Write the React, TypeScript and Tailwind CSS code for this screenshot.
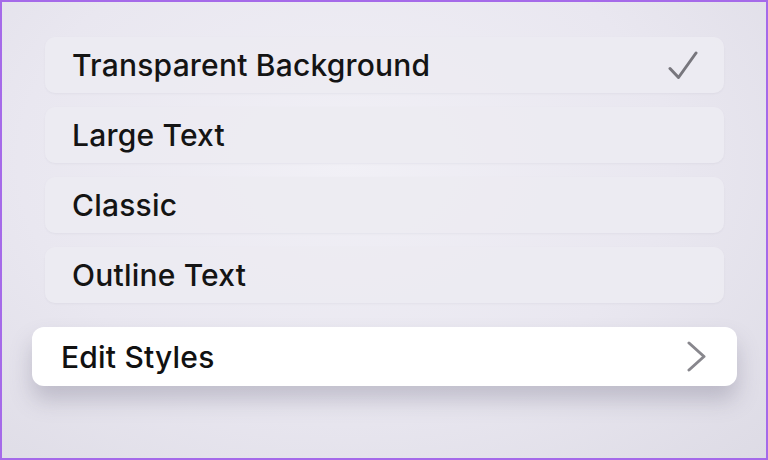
import React from 'react';

const options = [
  { label: 'Transparent Background', checked: true },
  { label: 'Large Text', checked: false },
  { label: 'Classic', checked: false },
  { label: 'Outline Text', checked: false },
];

const CheckIcon = () => (
  <svg width="30" height="29" viewBox="0 0 30 29" fill="none">
    <path d="M2 17.5 L10.5 26.5 L28 2" stroke="#77767d" strokeWidth="3" strokeLinecap="round" strokeLinejoin="round" />
  </svg>
);

const ChevronIcon = () => (
  <svg width="19" height="31" viewBox="0 0 19 31" fill="none">
    <path d="M2 2 L17 15.5 L2 29" stroke="#88878d" strokeWidth="3" strokeLinecap="round" strokeLinejoin="round" />
  </svg>
);

export default function App() {
  return (
    <div
      className="w-[768px] h-[460px] overflow-hidden border-2 border-[#a56ae9] bg-[radial-gradient(ellipse_at_45%_35%,#f1f0f6_0%,#e9e7f0_55%,#dddbe5_100%)]"
      style={{ fontFamily: 'Inter, "Liberation Sans", sans-serif' }}
    >
      <div className="flex flex-col pt-[35px]">
        {/* Subtitle style options */}
        <div className="flex flex-col gap-[14px] pl-[43px] pr-[42px]">
          {options.map(opt => (
            <div
              key={opt.label}
              className="h-[56px] rounded-[10px] bg-[#ecebf2]/90 shadow-[0_1px_2px_rgba(120,115,140,0.08)] flex items-center justify-between pl-[27px] pr-[26px]"
            >
              <span className="text-[30px] font-medium leading-none text-[#141414] tracking-[0.2px]">{opt.label}</span>
              {opt.checked && <CheckIcon />}
            </div>
          ))}
        </div>

        {/* Focused row */}
        <div className="mt-[24px] pl-[30px] pr-[29px]">
          <div className="h-[59px] rounded-[12px] bg-white shadow-[0_14px_22px_rgba(90,85,110,0.28)] flex items-center justify-between pl-[29px] pr-[31px]">
            <span className="text-[30px] font-medium leading-none text-[#111111] tracking-[0.2px]">Edit Styles</span>
            <ChevronIcon />
          </div>
        </div>
      </div>
    </div>
  );
}
